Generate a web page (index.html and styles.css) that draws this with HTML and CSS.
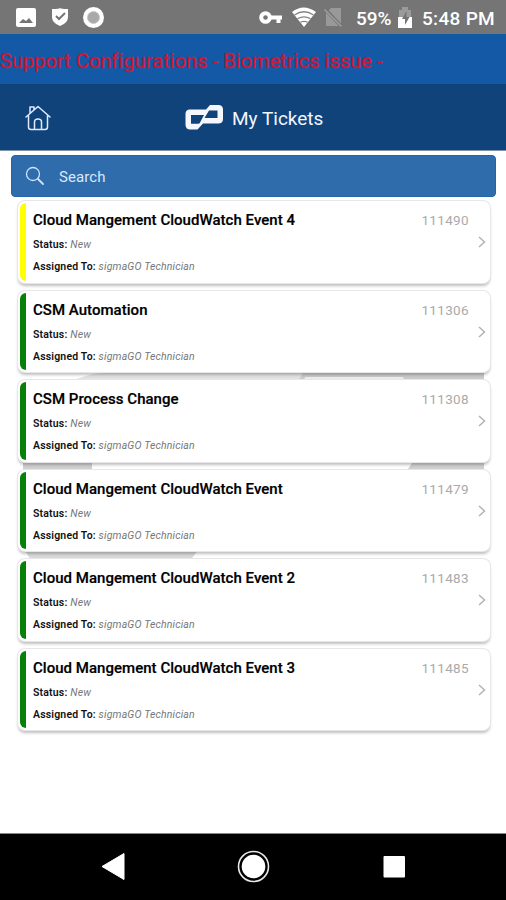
FILE: index.html
```html
<!DOCTYPE html>
<html lang="en">
<head>
<meta charset="utf-8">
<title>My Tickets</title>
<link rel="stylesheet" href="styles.css">
</head>
<body>
<div class="status">
  <svg class="status-left" width="120" height="34" viewBox="0 0 120 34">
    <rect x="16" y="8" width="20" height="19" rx="2" fill="#fff"/>
    <path d="M19 23l4-4 3 2 3-3 4 5z" fill="#757575"/>
    <path d="M52 9q8 0 8-1 1 1 8 1v8q0 6-8 9-8-3-8-9z" fill="#fff"/>
    <path d="M56 16l3 3 6-6" fill="none" stroke="#757575" stroke-width="2"/>
    <circle cx="93.500" cy="17.500" r="10.500" fill="#fff"/>
    <circle cx="93.500" cy="17.500" r="6" fill="#a9a9a9" stroke="#c8c8c8"/>
  </svg>
  <div class="status-right">
    <svg width="90" height="34" viewBox="0 0 90 34">
      <circle cx="6.500" cy="17.500" r="4.300" fill="none" stroke="#fff" stroke-width="4"/>
      <path d="M12 17.500h11M19.500 18v5" stroke="#fff" stroke-width="4" fill="none"/>
      <path d="M33 12q11.500-9 24 0L45 27z" fill="#fff"/>
      <path d="M35.500 15q9.500-6.500 19 0M38.500 18.800q6.500-4 13 0M41.500 22.300q3.500-2 7 0" stroke="#858585" stroke-width="1.300" fill="none"/>
      <path d="M72 8h10v18H67V13z" fill="#999"/>
      <path d="M66 9l17 18" stroke="#757575" stroke-width="3.500"/>
      <path d="M65.500 9.500l17 17" stroke="#a0a0a0" stroke-width="1.500"/>
    </svg>
    <span class="percent">59%</span>
    <svg class="battery" width="14" height="22" viewBox="0 0 14 22">
      <path d="M1 3h3V0h6v3h3v8H1z" fill="#9b9b9b"/>
      <path d="M0 10h14v11H0z" fill="#fff"/>
      <path d="M8.500 4L4 12h3v6l4.500-8H8.500z" fill="#757575"/>
    </svg>
    <span class="time">5:48 PM</span>
  </div>
</div>
<div class="banner">Support Configurations - Biometrics issue -</div>
<header class="header">
  <svg class="home" width="26" height="26" viewBox="0 0 26 26" fill="none" stroke="#dfe9ff" stroke-width="1.500" stroke-linejoin="round" stroke-linecap="round">
    <path d="M1 12L13 1.500 25 12M3.500 10.500V22q0 2.500 2.500 2.500h14q2.500 0 2.500-2.500V10.500M5 8V2h4v2.500M9.500 24v-7q0-3 3.500-3t3.500 3v7"/>
  </svg>
  <svg class="logo" width="40" height="28" viewBox="0 0 40 28">
    <path d="M22 6.500H5Q1.500 7 1.500 11V22Q2 26.500 6 26.500H13.500L19 20.500H35Q39 20 39 16V6Q38.500 2 34.500 2H26z" fill="#f5f7ff"/>
    <path d="M7 12H20L15.500 20.500H7zM25 7.500H33.500V15H20.500z" fill="#104379"/>
    <path d="M7 12H20L14.500 16.500V20.500H7z" fill="#104379"/>
  </svg>
  <h1 class="heading">My Tickets</h1>
</header>
<div class="search">
  <svg width="20" height="20" viewBox="0 0 20 20" fill="none" stroke="#cfe4fa" stroke-linecap="round">
    <circle cx="8" cy="8" r="6.500" stroke-width="1.300"/><path d="M13 13l5 5" stroke-width="1.800"/>
  </svg>
  <span class="search-text">Search</span>
</div>
<main class="list">
  <svg class="watermark" width="506" height="636" viewBox="0 197 506 636">
    <path d="M66 382L86 376Q94 373 104 373H303V382z" fill="#e2e2e2"/>
    <path d="M303 372H484V382H407L402 377H306L302 382H298z" fill="#cbcbcb"/>
    <path d="M306 377H402L407 382H301z" fill="#ececec"/>
    <path d="M23 460H92V472H23zM414 460H484V472H406z" fill="#d0d0d0"/>
    <path d="M24 549H199L189 562H32z" fill="#d9d9d9"/>
  </svg>
  <article class="card yellow"><div class="top"><h2>Cloud Mangement CloudWatch Event 4</h2><span class="num">111490</span></div><p class="state"><b>Status:</b> <i>New</i></p><p class="tech"><b>Assigned To:</b> <i>sigmaGO Technician</i></p><svg class="chevron" viewBox="0 0 8 12"><path d="M1 1l5.500 5L1 11"/></svg></article>
  <article class="card"><div class="top"><h2>CSM Automation</h2><span class="num">111306</span></div><p class="state"><b>Status:</b> <i>New</i></p><p class="tech"><b>Assigned To:</b> <i>sigmaGO Technician</i></p><svg class="chevron" viewBox="0 0 8 12"><path d="M1 1l5.500 5L1 11"/></svg></article>
  <article class="card"><div class="top"><h2>CSM Process Change</h2><span class="num">111308</span></div><p class="state"><b>Status:</b> <i>New</i></p><p class="tech"><b>Assigned To:</b> <i>sigmaGO Technician</i></p><svg class="chevron" viewBox="0 0 8 12"><path d="M1 1l5.500 5L1 11"/></svg></article>
  <article class="card"><div class="top"><h2>Cloud Mangement CloudWatch Event</h2><span class="num">111479</span></div><p class="state"><b>Status:</b> <i>New</i></p><p class="tech"><b>Assigned To:</b> <i>sigmaGO Technician</i></p><svg class="chevron" viewBox="0 0 8 12"><path d="M1 1l5.500 5L1 11"/></svg></article>
  <article class="card"><div class="top"><h2>Cloud Mangement CloudWatch Event 2</h2><span class="num">111483</span></div><p class="state"><b>Status:</b> <i>New</i></p><p class="tech"><b>Assigned To:</b> <i>sigmaGO Technician</i></p><svg class="chevron" viewBox="0 0 8 12"><path d="M1 1l5.500 5L1 11"/></svg></article>
  <article class="card"><div class="top"><h2>Cloud Mangement CloudWatch Event 3</h2><span class="num">111485</span></div><p class="state"><b>Status:</b> <i>New</i></p><p class="tech"><b>Assigned To:</b> <i>sigmaGO Technician</i></p><svg class="chevron" viewBox="0 0 8 12"><path d="M1 1l5.500 5L1 11"/></svg></article>
</main>
<nav class="nav">
  <svg width="506" height="66" viewBox="0 0 506 66">
    <path d="M102 32.500L124 19.500v26z" fill="#fff" stroke="#fff" stroke-linejoin="round"/>
    <circle cx="253.500" cy="32.500" r="15" fill="none" stroke="#e8e8e8" stroke-width="1.600"/>
    <circle cx="253.500" cy="32.500" r="11.800" fill="#fff"/>
    <rect x="383.500" y="22" width="21.500" height="21.500" rx="1" fill="#fff"/>
  </svg>
</nav>
</body>
</html>
```
FILE: styles.css
```css
* { box-sizing: border-box; }
body {
  margin: 0;
  width: 506px;
  height: 900px;
  display: flex;
  flex-direction: column;
  overflow: hidden;
  background: #fff;
  font-family: Roboto, "Liberation Sans", sans-serif;
}
svg { display: block; flex: none; }
h1, h2, p { margin: 0; }
.status {
  height: 34px;
  flex: none;
  background: #757575;
  color: #fff;
  display: flex;
  justify-content: space-between;
}
.status-right { display: flex; align-items: center; width: 247px; white-space: nowrap; }
.percent { font-size: 19px; font-weight: 500; width: 37px; margin-left: 7px; letter-spacing: 0; padding-top: 2px; }
.battery { margin: 2px 0 0 5px; }
.time { font-size: 19px; font-weight: 500; letter-spacing: 0.3px; margin-left: 10px; padding-top: 2px; }
.banner {
  height: 50px;
  flex: none;
  background: #1459a5;
  color: #cf1635;
  font-size: 20px;
  line-height: 54px;
  letter-spacing: 0.05px;
  -webkit-text-stroke: 0.3px #cf1635;
  white-space: nowrap;
}
.header {
  height: 67px;
  flex: none;
  background: #104379;
  border-bottom: 1px solid #7f93ad;
  display: flex;
  align-items: center;
}
.home { margin: 2px 0 0 25px; }
.logo { margin-left: 133px; }
.heading { margin-left: 8px; color: #f2f6ff; font-size: 19px; font-weight: 400; padding-top: 2px; }
.search {
  height: 42px;
  flex: none;
  margin: 4px 10px 4px 11px;
  border-radius: 4px;
  border: 1px solid #2465a8;
  background: #2f6cac;
  display: flex;
  align-items: center;
  padding-left: 13px;
}
.search-text { margin-left: 14px; color: #d9e8fa; font-size: 15px; letter-spacing: 0.1px; padding-top: 1px; }
.list {
  position: relative;
  flex: 1;
  display: flex;
  flex-direction: column;
  gap: 8px;
  padding: 0 16px 0 18px;
}
.watermark { position: absolute; left: 0; top: -4px; }
.card {
  position: relative;
  height: 81.5px;
  flex: none;
  background: #fff;
  border-radius: 7px;
  padding: 8px 21px 0 15px;
  box-shadow: 0 0 0 1px #e8e6e8, 0 3px 3px rgba(0, 0, 0, 0.25);
}
.card::before {
  content: "";
  position: absolute;
  left: 2px;
  top: 2px;
  bottom: 2px;
  width: 6px;
  border-radius: 6px 0 0 6px;
  background: #078007;
}
.yellow::before { background: #ff0; }
.top { display: flex; justify-content: space-between; height: 25px; line-height: 23px; white-space: nowrap; }
h2 { font-size: 15px; font-weight: 500; color: #000; letter-spacing: 0.03px; -webkit-text-stroke: 0.2px #000; }
.num { font-size: 13.5px; color: #aaa; letter-spacing: 0.35px; }
.state, .tech { font-size: 10.5px; line-height: 22px; letter-spacing: 0.17px; color: #111; white-space: nowrap; }
.state b, .tech b { font-weight: 600; }
.state i, .tech i { color: #777; font-weight: 400; }
.chevron { position: absolute; right: 4px; top: 35px; width: 8px; height: 12px; fill: none; stroke: #b3b3b3; stroke-width: 1.500; }
.nav { height: 67px; flex: none; background: #000; border-top: 1px solid #888; }
```
